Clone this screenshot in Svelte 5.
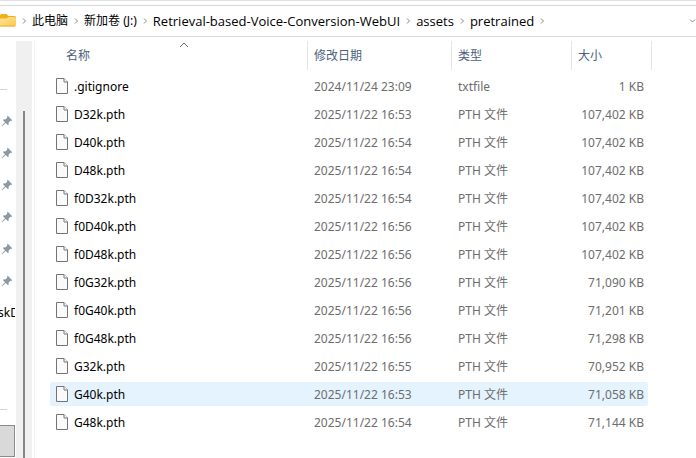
<script>
  const crumbs = [
    { label: '此电脑' },
    { label: '新加卷 (J:)' },
    { label: 'Retrieval-based-Voice-Conversion-WebUI', latin: true },
    { label: 'assets', latin: true },
    { label: 'pretrained', latin: true }
  ];

  const files = [
    { name: '.gitignore', date: '2024/11/24 23:09', type: 'txtfile', size: '1 KB' },
    { name: 'D32k.pth', date: '2025/11/22 16:53', type: 'PTH 文件', size: '107,402 KB' },
    { name: 'D40k.pth', date: '2025/11/22 16:54', type: 'PTH 文件', size: '107,402 KB' },
    { name: 'D48k.pth', date: '2025/11/22 16:54', type: 'PTH 文件', size: '107,402 KB' },
    { name: 'f0D32k.pth', date: '2025/11/22 16:54', type: 'PTH 文件', size: '107,402 KB' },
    { name: 'f0D40k.pth', date: '2025/11/22 16:56', type: 'PTH 文件', size: '107,402 KB' },
    { name: 'f0D48k.pth', date: '2025/11/22 16:56', type: 'PTH 文件', size: '107,402 KB' },
    { name: 'f0G32k.pth', date: '2025/11/22 16:56', type: 'PTH 文件', size: '71,090 KB' },
    { name: 'f0G40k.pth', date: '2025/11/22 16:56', type: 'PTH 文件', size: '71,201 KB' },
    { name: 'f0G48k.pth', date: '2025/11/22 16:56', type: 'PTH 文件', size: '71,298 KB' },
    { name: 'G32k.pth', date: '2025/11/22 16:55', type: 'PTH 文件', size: '70,952 KB' },
    { name: 'G40k.pth', date: '2025/11/22 16:53', type: 'PTH 文件', size: '71,058 KB' },
    { name: 'G48k.pth', date: '2025/11/22 16:54', type: 'PTH 文件', size: '71,144 KB' }
  ];

  const pins = [1, 2, 3, 4, 5, 6];

  let selected = $state('G40k.pth');
</script>

<div class="explorer">
  <nav class="address" aria-label="Address">
    <svg class="folder" width="16" height="16" viewBox="0 0 16 16" aria-hidden="true">
      <defs>
        <linearGradient id="folder-front" x1="0" y1="0" x2="1" y2="1">
          <stop offset="0" stop-color="#ffe59a" />
          <stop offset="1" stop-color="#fbc94b" />
        </linearGradient>
      </defs>
      <path d="M0 2.500Q0 1 1.500 1H6.500L8.500 3H14.500Q16 3 16 4.500V8H0Z" fill="#f2ae1b" />
      <path d="M0 5.500H6.500L8.500 4H14.500Q16 4 16 5.500V12Q16 13.500 14.500 13.500H0Z" fill="url(#folder-front)" />
      <path d="M0 13H15" stroke="#eeb02f" />
    </svg>
    <svg class="chevron" width="16" height="16" viewBox="0 0 16 16" aria-hidden="true">
      <path d="M7 5.500L9.500 8L7 10.500" />
    </svg>
    {#each crumbs as crumb}
      <button class="crumb" class:latin={crumb.latin}>{crumb.label}</button>
      <svg class="chevron" width="16" height="16" viewBox="0 0 16 16" aria-hidden="true">
        <path d="M7 5.500L9.500 8L7 10.500" />
      </svg>
    {/each}
    <button class="history" aria-label="Previous locations">
      <svg class="chevron" width="8" height="8" viewBox="0 0 8 8" aria-hidden="true">
        <path d="M2 2.500L4.500 5L7 2.500" />
      </svg>
    </button>
  </nav>

  <div class="body">
    <aside class="sidebar">
      <hr />
      <ul>
        {#each pins as pin (pin)}
          <li>
            <svg width="12" height="12" viewBox="0 0 12 12" aria-hidden="true">
              <path
                d="M6.800 0.800L11.200 5.200L10.200 6L9.500 5.800L7.700 7.600Q8 9.300 7 10.200L4.700 8L1.500 11L0.700 11.200L1 10.400L4 7.300L1.800 5Q3 4 4.500 4.400L6.300 2.600L6 1.700Z"
                fill="#8d9aa5"
              />
            </svg>
          </li>
        {/each}
        <li class="label">skD</li>
      </ul>
      <hr class="lower" />
      <div class="current"></div>
    </aside>
    <div class="scrollbar"><div class="thumb"></div></div>

    <main>
      <table>
        <colgroup>
          <col class="col-name" />
          <col class="col-date" />
          <col class="col-type" />
          <col class="col-size" />
          <col class="col-end" />
        </colgroup>
        <thead>
          <tr>
            <th class="first">
              <button>
                名称
                <svg class="sort" width="10" height="6" viewBox="0 0 10 6" aria-hidden="true">
                  <path d="M1 5L5 1L9 5" />
                </svg>
              </button>
            </th>
            <th><button>修改日期</button></th>
            <th><button>类型</button></th>
            <th class="plain"><button>大小</button></th>
            <td class="end"></td>
          </tr>
        </thead>
        <tbody>
          {#each files as file}
            <tr class:selected={file.name === selected} onclick={() => (selected = file.name)}>
              <td class="name">
                <div class="file">
                  <svg width="12" height="16" viewBox="0 0 12 16" aria-hidden="true">
                    <path d="M0.500 0.500H8L11.500 4V15.500H0.500Z" fill="#fafafa" stroke="#747474" />
                    <path d="M8 0.500V4H11.500" fill="#fff" stroke="#747474" />
                  </svg>
                  <span>{file.name}</span>
                </div>
              </td>
              <td>{file.date}</td>
              <td>{file.type}</td>
              <td class="size">{file.size}</td>
            </tr>
          {/each}
        </tbody>
      </table>
    </main>
  </div>
</div>

<style>
  :global(body) {
    margin: 0;
    background: #fff;
  }

  .explorer {
    display: flex;
    flex-direction: column;
    height: 100vh;
    box-sizing: border-box;
    border-top: 1px solid #dde2e7;
    overflow: hidden;
    font-family: "Noto Sans", "Noto Sans CJK SC", sans-serif;
    font-size: 12px;
    line-height: 16px;
    color: #000;
  }

  button {
    border: 0;
    padding: 0;
    background: none;
    font: inherit;
    color: inherit;
  }

  .address {
    display: flex;
    align-items: center;
    height: 30px;
    margin-top: 4px;
    border-top: 1px solid #d9d9d9;
    border-bottom: 1px solid #d9d9d9;
    white-space: nowrap;
  }

  .latin {
    font-family: "Open Sans", sans-serif;
    font-size: 13px;
  }

  .folder,
  .chevron {
    flex: none;
  }

  .chevron {
    fill: none;
    stroke: #8a8a8a;
  }

  .history {
    display: flex;
    margin-left: auto;
  }

  .body {
    display: flex;
    flex: 1;
    min-height: 0;
  }

  .sidebar {
    width: 16px;
    overflow: hidden;
  }

  hr {
    width: 7px;
    margin: 52px 0 15px;
    border: 0;
    border-top: 1px solid #d4d4d4;
  }

  hr.lower {
    margin: 80px 0 15px;
  }

  ul {
    margin: 0;
    padding: 0;
    list-style: none;
  }

  li {
    display: flex;
    align-items: center;
    height: 32px;
    padding-left: 1px;
  }

  li.label {
    width: 15px;
    padding: 0;
    overflow: hidden;
    text-indent: -2px;
  }

  .current {
    width: 14px;
    height: 30px;
    border: 1px solid #8a8a8a;
    border-left: 0;
    background: #d9d9d9;
  }

  .scrollbar {
    display: flex;
    width: 16px;
    margin-top: 4px;
    background: #f0f0f0;
  }

  .thumb {
    width: 2px;
    margin: 70px 0 0 7px;
    background: #858585;
  }

  main {
    flex: 1;
    min-width: 0;
    margin: 4px 0 0 2px;
    padding-left: 15px;
    border-left: 1px solid #f3f3f3;
  }

  table {
    width: 602px;
    margin-top: -4px;
    table-layout: fixed;
    border-spacing: 0 4px;
    color: #6d6d6d;
  }

  .col-name {
    width: 258px;
  }

  .col-date {
    width: 144px;
  }

  .col-type {
    width: 120px;
  }

  .col-size {
    width: 76px;
  }

  .col-end {
    width: 4px;
  }

  th,
  td {
    padding: 0 0 0 6px;
    text-align: left;
    font-weight: normal;
    white-space: nowrap;
  }

  th {
    height: 29px;
    border-right: 1px solid #e5e5e5;
    color: #4c607a;
  }

  th.first {
    padding-left: 8px;
  }

  th.plain {
    border-right: 0;
  }

  td.end {
    padding: 0;
    border-right: 1px solid #e5e5e5;
  }

  th button {
    position: relative;
    width: 100%;
    height: 28px;
    text-align: left;
  }

  .first button {
    padding-left: 8px;
  }

  .sort {
    position: absolute;
    top: 0;
    left: calc(50% - 4px);
    fill: none;
    stroke: #6d6d6d;
  }

  tbody td {
    box-sizing: border-box;
    height: 24px;
    padding-top: 2px;
  }

  tbody td.name {
    padding-top: 0;
  }

  .file {
    display: flex;
    align-items: center;
    gap: 6px;
    color: #000;
  }

  .file span {
    padding-top: 2px;
  }

  tbody td.size {
    padding: 2px 4px 0 0;
    text-align: right;
  }

  .selected td {
    background: #e5f3ff;
  }

  .selected .name {
    border-radius: 2px 0 0 2px;
  }

  .selected .size {
    border-radius: 0 2px 2px 0;
  }
</style>
